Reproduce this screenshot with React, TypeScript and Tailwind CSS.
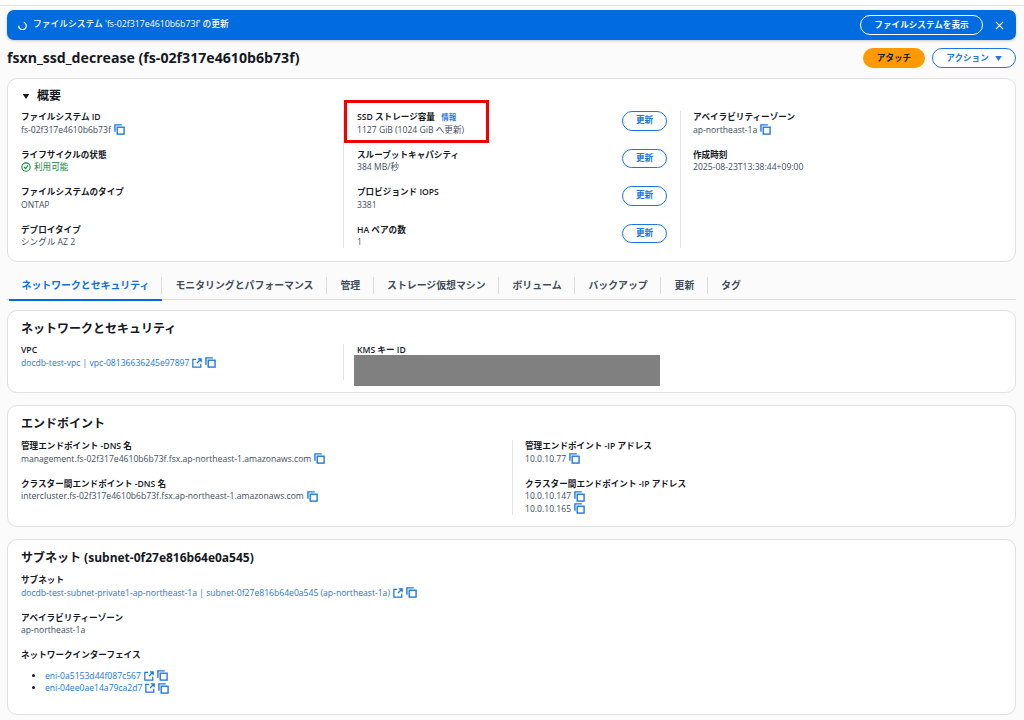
import React from 'react'

const FONT = "font-['Open_Sans','Noto_Sans_CJK_JP',sans-serif]"

const CopyIcon = () => (
  <svg viewBox="0 0 12 12" className="ml-[3px] h-[11px] w-[11px] shrink-0 text-[#1b76e0]" fill="none" stroke="currentColor" strokeWidth="1.5">
    <path d="M1 8.5V1h7.5" />
    <rect x="3.5" y="3.5" width="7.5" height="7.5" />
  </svg>
)

const ExternalIcon = () => (
  <svg viewBox="0 0 12 12" className="ml-[3px] h-[10px] w-[10px] shrink-0 text-[#1b76e0]" fill="none" stroke="currentColor" strokeWidth="1.5">
    <path d="M5 1.5H1v9.5h9.5V7" />
    <path d="M6 6l4.5-4.5M7 1h4v4" />
  </svg>
)

const Field = ({ label, children }: { label: React.ReactNode; children: React.ReactNode }) => (
  <div className="h-[25px]">
    <div className="h-[12.5px] text-[8.6px] leading-[12.5px] font-semibold text-[#16191f]">{label}</div>
    <div className="flex h-[12.5px] items-center text-[8.6px] leading-[12.5px] text-[#414d5c]">{children}</div>
  </div>
)

const UpdateButton = () => (
  <button className="flex h-[19.5px] w-[45px] items-center justify-center rounded-full border-[1.5px] border-[#1b76e0] bg-white text-[8.6px] font-bold text-[#1b76e0]">
    更新
  </button>
)

const Card = ({ title, className, children }: { title: React.ReactNode; className: string; children: React.ReactNode }) => (
  <section className={`rounded-[10px] border border-[#dfe0e2] bg-white px-[13px] ${className}`}>
    <h2 className="mb-[2px] flex h-[32px] items-center pt-[4px] text-[12px] font-bold text-[#16191f]">{title}</h2>
    {children}
  </section>
)

const tabs = ['ネットワークとセキュリティ', 'モニタリングとパフォーマンス', '管理', 'ストレージ仮想マシン', 'ボリューム', 'バックアップ', '更新', 'タグ']

export default function App() {
  return (
    <div className={`${FONT} h-[720px] w-[1024px] overflow-hidden bg-[#fbfbfb] pl-[7px] pr-[8px]`}>
      <div className="-mx-[7px] -mr-[8px] h-[6px] border-b border-[#e3e3e3] bg-white" />

      {/* Banner */}
      <div className="mt-[4px] flex h-[30px] items-center rounded-[7px] bg-[#006ce0] pr-[12px] pl-[11px] text-white shadow-[0_1px_3px_rgba(0,0,0,0.2)]">
        <svg viewBox="0 0 12 12" className="h-[9px] w-[9px]" fill="none" stroke="currentColor" strokeWidth="1.6">
          <path d="M2 3a5 5 0 1 0 8 1" transform="rotate(-40 6 6)" />
        </svg>
        <span className="ml-[6px] text-[8.75px] font-medium">ファイルシステム 'fs-02f317e4610b6b73f' の更新</span>
        <button className="ml-auto flex h-[19.5px] w-[123px] items-center justify-center rounded-full border border-white text-[8.6px] font-bold">
          ファイルシステムを表示
        </button>
        <svg viewBox="0 0 10 10" className="ml-[12px] h-[9px] w-[9px]" fill="none" stroke="currentColor" strokeWidth="1.2">
          <path d="M1 1l8 8M9 1l-8 8" />
        </svg>
      </div>

      {/* Title */}
      <div className="mt-[8px] flex h-[20px] items-center">
        <h1 className="text-[14.15px] font-bold text-[#16191f]">fsxn_ssd_decrease (fs-02f317e4610b6b73f)</h1>
        <button className="ml-auto flex h-[20px] w-[62px] items-center justify-center rounded-full bg-[#ff9900] text-[8.6px] font-bold text-[#16191f]">
          アタッチ
        </button>
        <button className="ml-[7px] flex h-[20px] w-[84px] items-center justify-center gap-[6px] rounded-full border-[1.5px] border-[#1b76e0] bg-white text-[8.6px] font-bold text-[#1b76e0]">
          アクション
          <svg viewBox="0 0 8 6" className="h-[5px] w-[7px]" fill="currentColor">
            <path d="M0 0h8L4 6z" />
          </svg>
        </button>
      </div>

      {/* Overview */}
      <section className="relative mt-[10px] h-[184px] rounded-[10px] border border-[#dfe0e2] bg-white px-[13px]">
        <h2 className="flex h-[32px] items-center pt-[2px] text-[12px] font-bold text-[#16191f]">
          <svg viewBox="0 0 8 6" className="mr-[7px] ml-px h-[5px] w-[8px]" fill="currentColor">
            <path d="M0 0h8L4 6z" />
          </svg>
          概要
        </h2>
        <div className="flex h-[137px]">
          <div className="flex w-[322px] flex-col gap-[12.5px]">
            <Field label="ファイルシステム ID">
              fs-02f317e4610b6b73f
              <CopyIcon />
            </Field>
            <Field label="ライフサイクルの状態">
              <span className="flex items-center gap-[3px] text-[#13873f]">
                <svg viewBox="0 0 12 12" className="h-[10px] w-[10px]" fill="none" stroke="currentColor" strokeWidth="1.3">
                  <circle cx="6" cy="6" r="5" />
                  <path d="M3.5 6l2 2 3-4" />
                </svg>
                利用可能
              </span>
            </Field>
            <Field label="ファイルシステムのタイプ">ONTAP</Field>
            <Field label="デプロイタイプ">シングル AZ 2</Field>
          </div>
          <div className="w-[337px] border-l border-[#e3e3e3] pr-[13px] pl-[13px]">
            <div className="flex flex-col gap-[12.5px]">
              <div className="flex justify-between">
                <Field
                  label={
                    <span>
                      SSD ストレージ容量 <span className="ml-[4px] text-[7.5px] font-bold text-[#1b76e0]">情報</span>
                    </span>
                  }
                >
                  1127 GiB (1024 GiB へ更新)
                </Field>
                <UpdateButton />
              </div>
              <div className="flex justify-between">
                <Field label="スループットキャパシティ">384 MB/秒</Field>
                <UpdateButton />
              </div>
              <div className="flex justify-between">
                <Field label="プロビジョンド IOPS">3381</Field>
                <UpdateButton />
              </div>
              <div className="flex justify-between">
                <Field label="HA ペアの数">1</Field>
                <UpdateButton />
              </div>
            </div>
          </div>
          <div className="flex-1 border-l border-[#e3e3e3] pl-[12px]">
            <div className="flex flex-col gap-[12.5px]">
              <Field label="アベイラビリティーゾーン">
                ap-northeast-1a
                <CopyIcon />
              </Field>
              <Field label="作成時刻">2025-08-23T13:38:44+09:00</Field>
            </div>
          </div>
        </div>
        {/* highlight drawn over the screenshot */}
        <div className="absolute top-[21px] left-[336px] h-[43px] w-[145px] border-[3px] border-[#f00000]" />
      </section>

      {/* Tabs */}
      <nav className="mt-[8px] flex h-[30px] border-b border-[#dcdcdc] pl-[2px]">
        {tabs.map((tab, i) => (
          <div key={tab} className={`relative flex h-[30px] items-center pt-[1px] ${i === 0 ? 'w-[153px] justify-center' : 'px-[13.45px]'}`}>
            <span className={`text-[9.9px] font-semibold whitespace-nowrap ${i === 0 ? 'text-[#0b6fdd]' : 'text-[#414d5c]'}`}>{tab}</span>
            {i === 0 && <div className="absolute right-0 -bottom-px left-0 h-[2px] bg-[#006ce0]" />}
            {i < tabs.length - 1 && <div className="absolute top-[7px] right-0 h-[17px] w-px bg-[#dcdcdc]" />}
          </div>
        ))}
      </nav>

      {/* Network and security */}
      <div className="mt-[10px]">
        <Card title="ネットワークとセキュリティ" className="h-[83px]">
          <div className="relative -mt-px flex h-[36px]">
            <div className="w-[322px]">
              <Field label="VPC">
                <span className="text-[#1b76e0]">docdb-test-vpc | vpc-08136636245e97897</span>
                <ExternalIcon />
                <CopyIcon />
              </Field>
            </div>
            <div className="flex-1 border-l border-[#e3e3e3] pl-[13px]">
              <Field label="KMS キー ID">{null}</Field>
            </div>
            {/* redaction block over the value */}
            <div className="absolute top-[11px] left-[333px] h-[31px] w-[306px] bg-[#808080]" />
          </div>
        </Card>
      </div>

      {/* Endpoints */}
      <div className="mt-[12px]">
        <Card title="エンドポイント" className="h-[122px]">
          <div className="flex h-[75px]">
            <div className="flex w-[491px] flex-col gap-[12.5px]">
              <Field label="管理エンドポイント -DNS 名">
                management.fs-02f317e4610b6b73f.fsx.ap-northeast-1.amazonaws.com
                <CopyIcon />
              </Field>
              <Field label="クラスター間エンドポイント -DNS 名">
                intercluster.fs-02f317e4610b6b73f.fsx.ap-northeast-1.amazonaws.com
                <CopyIcon />
              </Field>
            </div>
            <div className="flex flex-1 flex-col gap-[12.5px] border-l border-[#e3e3e3] pl-[12px]">
              <Field label="管理エンドポイント -IP アドレス">
                10.0.10.77
                <CopyIcon />
              </Field>
              <div>
                <Field label="クラスター間エンドポイント -IP アドレス">
                  10.0.10.147
                  <CopyIcon />
                </Field>
                <div className="flex h-[12.5px] items-center text-[8.6px] leading-[12.5px] text-[#414d5c]">
                  10.0.10.165
                  <CopyIcon />
                </div>
              </div>
            </div>
          </div>
        </Card>
      </div>

      {/* Subnet */}
      <div className="mt-[12px]">
        <Card title="サブネット (subnet-0f27e816b64e0a545)" className="h-[176px]">
          <div className="flex flex-col gap-[12.5px]">
            <Field label="サブネット">
              <span className="text-[#1b76e0]">docdb-test-subnet-private1-ap-northeast-1a | subnet-0f27e816b64e0a545 (ap-northeast-1a)</span>
              <ExternalIcon />
              <CopyIcon />
            </Field>
            <Field label="アベイラビリティーゾーン">ap-northeast-1a</Field>
            <div>
              <div className="h-[12.5px] text-[8.6px] leading-[12.5px] font-semibold text-[#16191f]">ネットワークインターフェイス</div>
              <ul className="mt-[8px] list-disc pl-[24px] text-[8.6px] leading-[12.5px] text-[#16191f]">
                {['eni-0a5153d44f087c567', 'eni-04ee0ae14a79ca2d7'].map(eni => (
                  <li key={eni}>
                    <span className="inline-flex items-center align-top text-[#1b76e0]">
                      {eni}
                      <ExternalIcon />
                      <CopyIcon />
                    </span>
                  </li>
                ))}
              </ul>
            </div>
          </div>
        </Card>
      </div>
    </div>
  )
}
